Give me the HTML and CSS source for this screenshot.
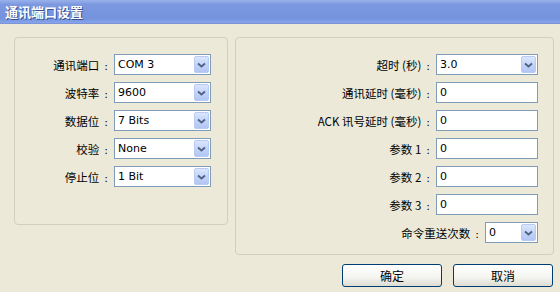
FILE: index.html
```html
<!DOCTYPE html>
<html lang="zh-CN">
<head>
    <meta charset="UTF-8">
    <title>通讯端口设置</title>
    <link rel="stylesheet" href="styles.css">
</head>
<body>
    <div class="dialog">
        <div class="titlebar">通讯端口设置</div>

        <div class="content">
            <!-- serial line settings -->
            <div class="group group-left">
                <div class="row">
                    <span class="label">通讯端口<span class="colon">:</span></span>
                    <div class="combo wide"><span class="value">COM 3</span><span class="drop"><svg width="9" height="6" viewBox="0 0 9 6"><path d="M1 1.5 L4.5 4.5 L8 1.5" fill="none" stroke="#4d6185" stroke-width="1.8"/></svg></span></div>
                </div>
                <div class="row">
                    <span class="label">波特率<span class="colon">:</span></span>
                    <div class="combo wide"><span class="value">9600</span><span class="drop"><svg width="9" height="6" viewBox="0 0 9 6"><path d="M1 1.5 L4.5 4.5 L8 1.5" fill="none" stroke="#4d6185" stroke-width="1.8"/></svg></span></div>
                </div>
                <div class="row">
                    <span class="label">数据位<span class="colon">:</span></span>
                    <div class="combo wide"><span class="value">7 Bits</span><span class="drop"><svg width="9" height="6" viewBox="0 0 9 6"><path d="M1 1.5 L4.5 4.5 L8 1.5" fill="none" stroke="#4d6185" stroke-width="1.8"/></svg></span></div>
                </div>
                <div class="row">
                    <span class="label">校验<span class="colon">:</span></span>
                    <div class="combo wide"><span class="value">None</span><span class="drop"><svg width="9" height="6" viewBox="0 0 9 6"><path d="M1 1.5 L4.5 4.5 L8 1.5" fill="none" stroke="#4d6185" stroke-width="1.8"/></svg></span></div>
                </div>
                <div class="row">
                    <span class="label">停止位<span class="colon">:</span></span>
                    <div class="combo wide"><span class="value">1 Bit</span><span class="drop"><svg width="9" height="6" viewBox="0 0 9 6"><path d="M1 1.5 L4.5 4.5 L8 1.5" fill="none" stroke="#4d6185" stroke-width="1.8"/></svg></span></div>
                </div>
            </div>

            <!-- timing settings -->
            <div class="group group-right">
                <div class="row">
                    <span class="label">超时 (秒)<span class="colon">:</span></span>
                    <div class="combo field"><span class="value">3.0</span><span class="drop"><svg width="9" height="6" viewBox="0 0 9 6"><path d="M1 1.5 L4.5 4.5 L8 1.5" fill="none" stroke="#4d6185" stroke-width="1.8"/></svg></span></div>
                </div>
                <div class="row">
                    <span class="label">通讯延时 (毫秒)<span class="colon">:</span></span>
                    <div class="textbox field">0</div>
                </div>
                <div class="row">
                    <span class="label">ACK 讯号延时 (毫秒)<span class="colon">:</span></span>
                    <div class="textbox field">0</div>
                </div>
                <div class="row">
                    <span class="label">参数 1<span class="colon">:</span></span>
                    <div class="textbox field">0</div>
                </div>
                <div class="row">
                    <span class="label">参数 2<span class="colon">:</span></span>
                    <div class="textbox field">0</div>
                </div>
                <div class="row">
                    <span class="label">参数 3<span class="colon">:</span></span>
                    <div class="textbox field">0</div>
                </div>
                <div class="row">
                    <span class="label">命令重送次数<span class="colon">:</span></span>
                    <div class="combo small"><span class="value">0</span><span class="drop"><svg width="9" height="6" viewBox="0 0 9 6"><path d="M1 1.5 L4.5 4.5 L8 1.5" fill="none" stroke="#4d6185" stroke-width="1.8"/></svg></span></div>
                </div>
            </div>
        </div>

        <div class="buttons">
            <div class="btn">确定</div>
            <div class="btn">取消</div>
        </div>
    </div>
</body>
</html>
```

FILE: styles.css
```css
body {
    margin: 0;
    padding: 0;
    background-color: #ece9d8;
    font-family: "Noto Sans CJK SC", "DejaVu Sans", sans-serif;
    font-size: 12px;
    color: #000;
}

.dialog {
    width: 560px;
    height: 292px;
    background-color: #ece9d8;
    overflow: hidden;
}

.titlebar {
    height: 24px;
    line-height: 24px;
    padding-left: 5px;
    color: #fff;
    font-weight: bold;
    font-size: 13px;
    text-shadow: 1px 1px 0 #3a4f8e;
    background: linear-gradient(to bottom, #9ab1ea 0%, #7b98e0 20%, #7593dd 80%, #86a5ec 100%);
    border-bottom: 1px solid #7d95d6;
    box-sizing: border-box;
}

.content {
    display: flex;
    align-items: flex-start;
    gap: 7px;
    padding: 13px 0 0 14px;
}

.group {
    border: 1px solid #d0d0bf;
    border-radius: 4px;
    box-sizing: border-box;
    display: flex;
    flex-direction: column;
    gap: 7px;
}

.group-left {
    width: 214px;
    height: 188px;
    padding: 16px 16px 0 0;
}

.group-right {
    width: 319px;
    height: 218px;
    padding: 16px 15px 0 0;
}

.row {
    display: flex;
    justify-content: flex-end;
    align-items: center;
    height: 21px;
    gap: 6px;
}

.label {
    white-space: nowrap;
    font-size: 11.5px;
}

.colon {
    font-family: "DejaVu Sans", sans-serif;
    font-size: 11px;
    margin-left: 5px;
}

.combo,
.textbox {
    height: 21px;
    box-sizing: border-box;
    border: 1px solid #7f9db9;
    background-color: #fff;
    font-family: "DejaVu Sans", sans-serif;
    font-size: 11px;
}

.combo {
    display: flex;
    align-items: center;
    justify-content: space-between;
    padding: 1px;
}

.value {
    padding-left: 2px;
}

.textbox {
    line-height: 19px;
    padding-left: 3px;
}

.wide {
    width: 97px;
}

.field {
    width: 102px;
}

.small {
    width: 53px;
}

.drop {
    width: 15px;
    height: 17px;
    border: 1px solid #b9cbf3;
    border-radius: 2px;
    box-sizing: border-box;
    background: linear-gradient(to bottom, #dbe6fd 0%, #c4d4f8 50%, #b2c6f4 100%);
    display: flex;
    align-items: center;
    justify-content: center;
}

.buttons {
    display: flex;
    justify-content: flex-end;
    gap: 11px;
    padding: 9px 7px 0 0;
}

.btn {
    width: 100px;
    height: 23px;
    line-height: 21px;
    box-sizing: border-box;
    border: 1px solid #003c74;
    border-radius: 3px;
    text-align: center;
    font-size: 12px;
    background: linear-gradient(to bottom, #ffffff 0%, #f4f4f0 60%, #dcdcd2 100%);
}
```
